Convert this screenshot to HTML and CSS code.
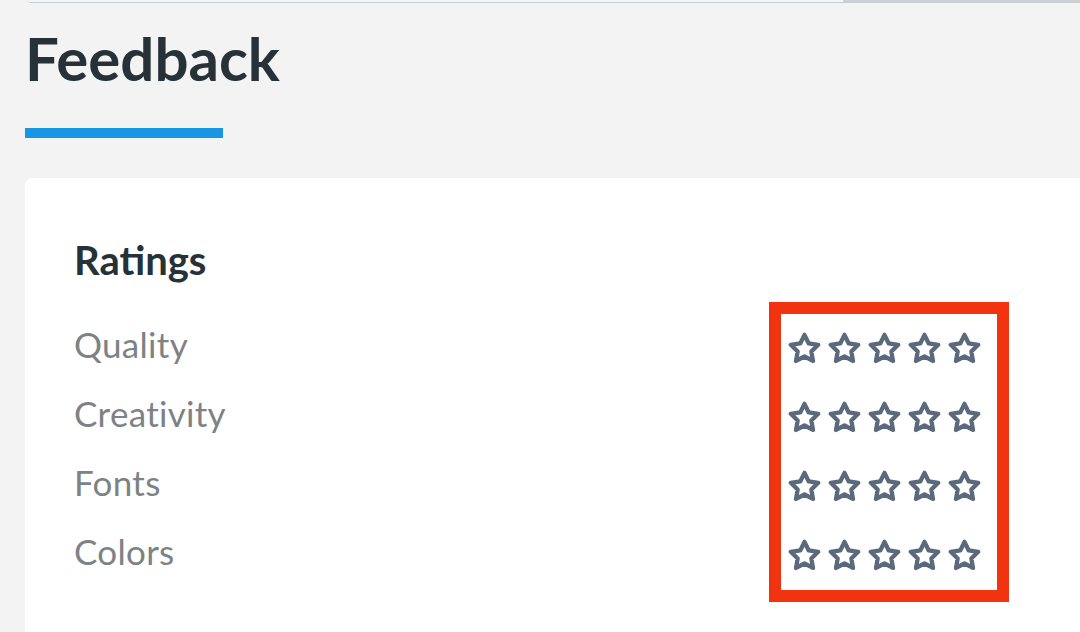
FILE: index.html
```html
<!DOCTYPE html>
<html lang="en">
<head>
    <meta charset="UTF-8">
    <meta name="viewport" content="width=device-width, initial-scale=1.0">
    <title>Feedback</title>
    <link rel="stylesheet" href="styles.css">
</head>
<body>
    <div class="top-edge">
        <div class="edge-light"></div>
        <div class="edge-dark"></div>
    </div>

    <h1>Feedback</h1>
    <div class="underline"></div>

    <div class="card">
        <h2>Ratings</h2>
        <div class="ratings">
            <div class="labels">
                <div class="label">Quality</div>
                <div class="label">Creativity</div>
                <div class="label">Fonts</div>
                <div class="label">Colors</div>
            </div>
            <div class="stars-box" id="starsBox"></div>
        </div>
    </div>

    <script>
        // build the four rows of empty stars
        const starSvg = '<svg class="star" viewBox="0.5 0.5 23 23"><path d="M12 2.5l2.95 5.98 6.6.96-4.78 4.65 1.13 6.57L12 17.56l-5.9 3.1 1.13-6.57-4.78-4.65 6.6-.96L12 2.5z"/></svg>';
        const box = document.getElementById('starsBox');
        for (let i = 0; i < 4; i++) {
            const row = document.createElement('div');
            row.className = 'star-row';
            row.innerHTML = starSvg.repeat(5);
            box.appendChild(row);
        }
    </script>
</body>
</html>
```

FILE: styles.css
```css
html, body {
    margin: 0;
    padding: 0;
}
body {
    font-family: Lato, 'Open Sans', sans-serif;
    background-color: #f3f3f3;
    width: 1080px;
    height: 632px;
    overflow: hidden;
}
.top-edge {
    display: flex;
    margin-left: 28px;
}
.edge-light {
    width: 815px;
    height: 2px;
    background-color: #f7f7f8;
    border-bottom: 1px solid #c6cbd2;
    border-bottom-left-radius: 6px;
}
.edge-dark {
    flex: 1;
    height: 2px;
    border-bottom: 1px solid #c9cdd3;
    background-color: #cdd1d6;
}
h1 {
    margin: 19px 0 0 25px;
    font-size: 60px;
    font-weight: 700;
    line-height: 72px;
    color: #263238;
}
.underline {
    width: 198px;
    height: 10px;
    margin: 34px 0 0 25px;
    background-color: #1896e6;
}
.card {
    margin: 40px -40px 0 25px;
    padding: 58px 50px 60px 49px;
    background-color: #ffffff;
    border-radius: 8px;
    min-height: 500px;
}
h2 {
    margin: 0;
    font-size: 40px;
    font-weight: 700;
    line-height: 48px;
    color: #263238;
}
.ratings {
    display: flex;
    margin-top: 18px;
}
.labels {
    width: 695px;
    padding-top: 8px;
}
.label {
    height: 69px;
    line-height: 69px;
    font-size: 35px;
    letter-spacing: 0.3px;
    color: #7d8285;
}
.stars-box {
    border: 12px solid #f2330f;
    padding: 0 16px 0 7px;
}
.star-row {
    display: flex;
    align-items: center;
    gap: 7px;
    height: 69px;
}
.star {
    width: 33px;
    height: 33px;
    fill: none;
    stroke: #5a697c;
    stroke-width: 3;
    stroke-linejoin: round;
}
```
